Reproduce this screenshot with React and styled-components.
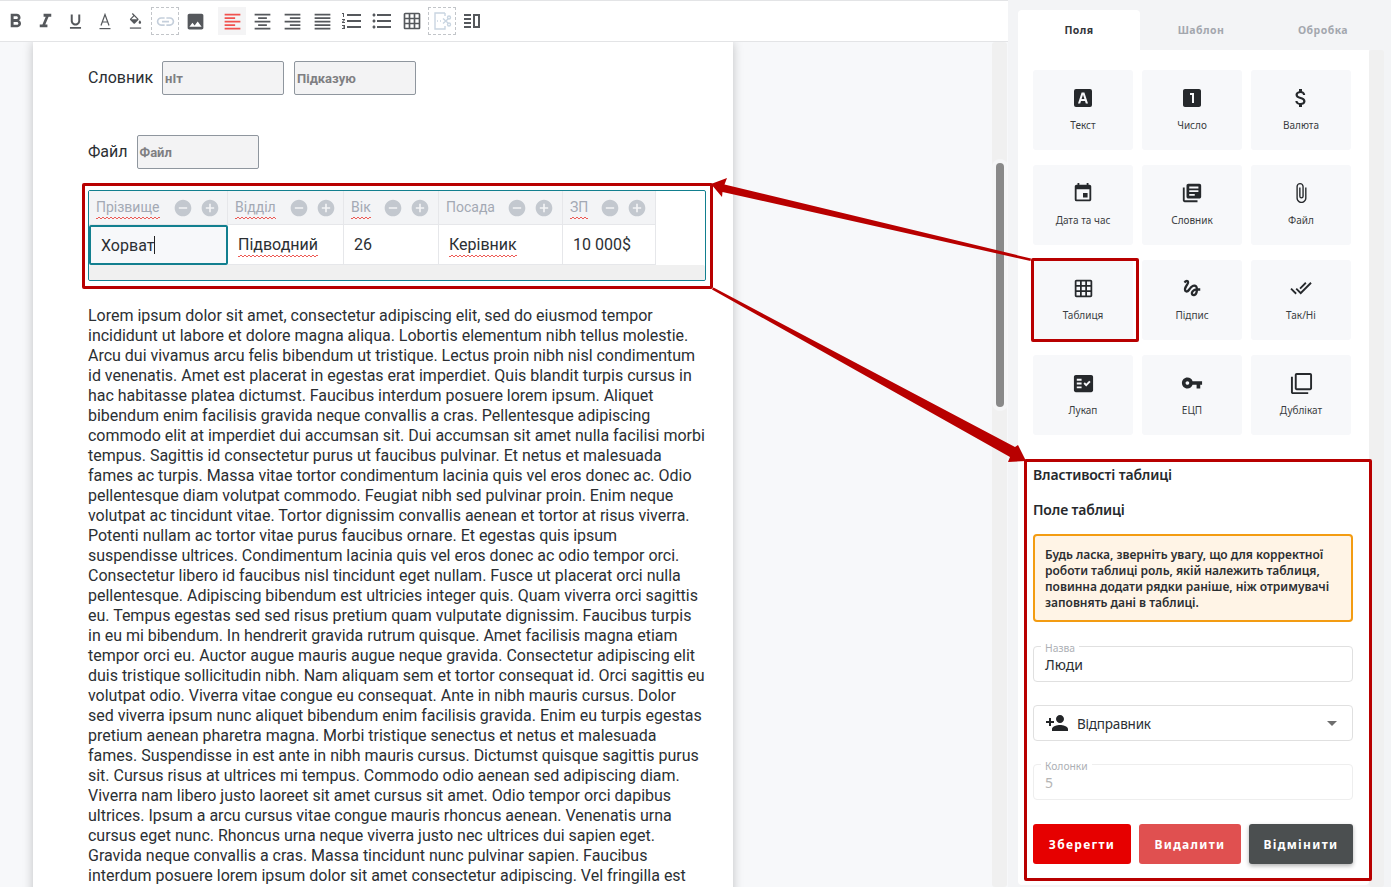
import React from 'react';
import styled, { createGlobalStyle, css } from 'styled-components';
import {
  MdFormatBold, MdFormatItalic, MdFormatUnderlined, MdLink, MdImage,
  MdFormatAlignLeft, MdFormatAlignCenter, MdFormatAlignRight, MdFormatAlignJustify, MdFormatListNumbered,
  MdFormatListBulleted, MdGridOn, MdRemoveCircle, MdAddCircle, MdAttachMoney, MdLooksOne, MdEvent,
  MdLibraryBooks, MdAttachFile, MdGesture, MdDoneAll, MdFactCheck, MdVpnKey, MdFilterNone, MdPersonAdd, MdArrowDropDown,
} from 'react-icons/md';

const Global = createGlobalStyle`
  html, body { margin: 0; padding: 0; height: 887px; overflow: hidden; background: #f3f4f6; }
  * { box-sizing: border-box; }
`;

const squiggle = css`
  padding-top: 2px;
  padding-bottom: 2px;
  background-image:
    linear-gradient(135deg, transparent 38%, #ee5a55 38%, #ee5a55 62%, transparent 62%),
    linear-gradient(45deg, transparent 38%, #ee5a55 38%, #ee5a55 62%, transparent 62%);
  background-size: 4px 2px;
  background-position: left bottom, 2px bottom;
  background-repeat: repeat-x;
`;

const Shell = styled.div`
  position: relative; width: 1391px; height: 887px; overflow: hidden; display: flex;
  font-family: Roboto, sans-serif; color: #2b2f33;
`;
const EditorColumn = styled.div`
  width: 1008px; height: 887px; display: flex; flex-direction: column; background: #f7f8fa; flex: none;
`;
const Toolbar = styled.div`
  height: 42px; flex: none; display: flex; align-items: center; gap: 2px; padding-left: 1px;
  background: #fff; border-top: 1px solid #e3e4e6; border-bottom: 1px solid #e3e4e6; color: #55585c;
`;
const ToolButton = styled.div`
  width: 28px; height: 28px; display: flex; align-items: center; justify-content: center; font-size: ${p => p.$size || 21}px;
  margin-left: ${p => (p.$gap ? '7px' : '0')};
  background: ${p => (p.$active ? '#f4f4f5' : 'transparent')};
  color: ${p => (p.$active ? '#f0524f' : p.$muted ? '#c5cfdb' : 'inherit')};
  border: ${p => (p.$dashed ? '1px dashed #c2c5c9' : 'none')};
`;
const EditorBody = styled.div`
  flex: 1; display: flex; min-height: 0;
`;
const PageArea = styled.div`
  flex: 1; min-width: 0; padding-left: 33px; overflow: hidden;
`;
const Page = styled.div`
  width: 700px; height: 900px; background: #fff; padding: 19px 27px 0 55px; box-shadow: 0 0 10px rgba(0,0,0,.22);
`;
const FormRow = styled.div`
  display: flex; align-items: center; height: 34px; margin-bottom: ${p => p.$mb || 0}px;
`;
const FieldLabel = styled.span`
  font-size: 16px; line-height: 20px; margin-right: 9px; color: #2b2f33;
`;
const PlaceholderInput = styled.div`
  width: 122px; height: 34px; margin-right: 10px; background: #f3f3f4; border: 1px solid #8f969e; border-radius: 2px;
  display: flex; align-items: center; padding: 1px 0 0 2px; font-size: 13px; font-weight: 700; color: #7f7f82;
`;
const TableBox = styled.div`
  width: 618px; height: 91px; margin-top: 21px; border: 1px solid #127f8f; border-radius: 2px; display: flex; flex-direction: column;
`;
const ColumnGrid = styled.div`
  display: grid; grid-template-columns: 139px 116px 95px 124px 93px; width: 567px;
`;
const HeaderCell = styled.div`
  height: 34px; background: #f3f4f6; border-right: 1px solid #e6e7ea; border-bottom: 1px solid #e6e7ea; display: flex; align-items: center; padding-left: 7px;
  font-size: 14px; color: #a3a9b4; font-weight: 400;
`;
const HeaderLabel = styled.span`
  flex: 1; display: flex;
`;
const HeaderText = styled.span`
  ${p => p.$bad && squiggle}
  line-height: 19px;
`;
const HeaderIcons = styled.span`
  display: flex; gap: 7px; margin-right: ${p => p.$mr}px; font-size: 20px; color: #c3c8cf;
`;
const BodyCell = styled.div`
  height: 40px; display: flex; align-items: center; padding-left: 10px; font-size: 16px; color: #2b2f33;
  background: ${p => (p.$selected ? '#f7f8fa' : '#fff')};
  border: ${p => (p.$selected ? '2px solid #127f8f' : 'none')};
  border-right: ${p => (p.$selected ? '2px solid #127f8f' : '1px solid #e6e7ea')};
  border-bottom: ${p => (p.$selected ? '2px solid #127f8f' : '1px solid #e6e7ea')};
  border-radius: ${p => (p.$selected ? '2px' : '0')};
`;
const BadWord = styled.span`
  ${squiggle}
  display: inline-block; line-height: 20px;
`;
const Caret = styled.span`
  display: inline-block; width: 1px; height: 18px; background: #222; vertical-align: -3px;
`;
const TableScroll = styled.div`
  flex: 1; background: #f0f0f0; border-radius: 2px;
`;
const BodyText = styled.p`
  margin: 25px 0 0; width: 617.5px; font-size: 16px; line-height: 20px; color: #2b2f33; letter-spacing: -0.012px;
`;
const MainScroll = styled.div`
  width: 15px; flex: none; margin-right: 1px; background: #f0f0f0; border-radius: 3px; display: flex; flex-direction: column; align-items: center; padding-top: 121px; overflow: hidden;
`;
const MainThumb = styled.div`
  width: 8px; height: 244px; background: #898989; border-radius: 4px; flex: none; box-shadow: 0 0 0 4px #f5f6f7;
`;
const Sidebar = styled.div`
  flex: 1; padding: 10px 7px 0 10px; font-family: "Noto Sans", sans-serif; display: flex; flex-direction: column; min-width: 0;
`;
const Tabs = styled.div`
  display: flex; height: 40px; flex: none;
`;
const Tab = styled.div`
  width: 122px; display: flex; align-items: center; justify-content: center; font-size: 10.5px; font-weight: 700; letter-spacing: .45px; padding-bottom: 1px;
  background: ${p => (p.$active ? '#fff' : 'transparent')};
  color: ${p => (p.$active ? '#33363a' : '#a3a7ae')};
  border-radius: 4px 4px 0 0;
`;
const SideBody = styled.div`
  flex: 1; display: flex; min-height: 0;
`;
const SidePanel = styled.div`
  width: 351px; height: 835px; background: #fff; padding: 20px 16px 0 15px; border-radius: 0 0 4px 4px;
`;
const SideScroll = styled.div`
  width: 15px; height: 837px; background: #f0f0f0; border-radius: 3px;
`;
const TileGrid = styled.div`
  display: grid; grid-template-columns: repeat(3, 100px); gap: 15px 9px;
`;
const Tile = styled.div`
  height: 80px; background: #f7f8fa; border-radius: 3px; display: flex; flex-direction: column; align-items: center;
  padding-top: 16px; color: #26292c;
`;
const TileIcon = styled.span`
  width: 24px; height: 24px; display: flex; align-items: center; justify-content: center; font-size: ${p => p.$size || 24}px;
  svg { display: block; }
`;
const TileLabel = styled.div`
  margin-top: 7px; font-size: 10px; line-height: 16px; color: #3a3d41;
`;
const Heading = styled.div`
  font-size: 14px; font-weight: 600; line-height: 20px; color: #26292c; letter-spacing: -0.15px; margin-top: ${p => p.$mt}px;
`;
const Notice = styled.div`
  margin-top: 14px; width: 320px; height: 88px; background: #fff4e6; border: 2px solid #f39c12; border-radius: 4px;
  padding: 11px 10px 0; font-size: 12px; line-height: 16px; font-weight: 600; color: #2c2e31; letter-spacing: -0.02px;
`;
const Outlined = styled.div`
  position: relative; width: 320px; height: 36px; margin-top: ${p => p.$mt}px; border: 1px solid ${p => (p.$disabled ? '#eeeeee' : '#e0e0e0')};
  border-radius: 4px; display: flex; align-items: center; padding: 0 11px; font-size: 14px;
  color: ${p => (p.$disabled ? '#b5b5b5' : '#2b2f33')};
`;
const FloatLabel = styled.span`
  position: absolute; left: 7px; top: -5px; background: #fff; padding: 0 4px; font-size: 10.3px; line-height: 13px; color: #adb0b5;
`;
const SelectValue = styled.span`
  font-size: 13.5px; letter-spacing: -0.2px; padding-top: 1px;
`;
const PersonIcon = styled.span`
  font-size: 24px; display: flex; margin-right: 8px; color: #232528;
`;
const Chevron = styled.span`
  margin-left: auto; font-size: 24px; display: flex; color: #6e6e6e; margin-right: -3px;
`;
const Actions = styled.div`
  display: flex; gap: 8px; margin-top: 24px; width: 320px;
`;
const ActionButton = styled.div`
  height: 40px; width: ${p => p.$w}px; background: ${p => p.$bg}; color: #fff; border-radius: 3px; display: flex; align-items: center; justify-content: center;
  font-size: 12px; font-weight: 700; letter-spacing: 1.3px;
  box-shadow: ${p => (p.$shadow ? '0 2px 4px rgba(0,0,0,.3)' : 'none')};
`;
const Marker = styled.div`
  position: absolute; left: ${p => p.$x}px; top: ${p => p.$y}px; width: ${p => p.$w}px; height: ${p => p.$h}px;
  border: 3px solid #b80000; border-radius: 2px; pointer-events: none;
`;
const ArrowLayer = styled.svg`
  position: absolute; left: 0; top: 0; pointer-events: none;
`;

const TextBoxIcon = () => (
  <svg width="24" height="24" viewBox="0 0 24 24" fill="currentColor"><path fillRule="evenodd" d="M3 5a2 2 0 0 1 2-2h14a2 2 0 0 1 2 2v14a2 2 0 0 1-2 2H5a2 2 0 0 1-2-2V5zm7.6 1.5L7 17.5h2.2l.8-2.6h4l.8 2.6H17L13.4 6.5h-2.8zm1.4 2.3L13.4 13h-2.8L12 8.8z" /></svg>
);
const TextColorIcon = () => (
  <svg width="14" height="17" viewBox="0 0 14 17" fill="none" stroke="currentColor" strokeWidth="1.2">
    <path d="M3 12.5L7 1.5l4 11M4.4 9h5.2" /><path d="M1.5 15.6h11" />
  </svg>
);
const FillIcon = () => (
  <svg width="15" height="17" viewBox="0 0 24 27" fill="currentColor">
    <path d="M16.56 8.94L7.62 0 6.21 1.41l2.38 2.38-5.15 5.15c-.59.59-.59 1.54 0 2.12l5.5 5.5c.29.29.68.44 1.06.44s.77-.15 1.06-.44l5.5-5.5c.59-.58.59-1.53 0-2.12zM5.21 10L10 5.21 14.79 10H5.21zM19 11.5s-2 2.17-2 3.5c0 1.1.9 2 2 2s2-.9 2-2c0-1.33-2-3.5-2-3.5z" />
    <rect x="3" y="23" width="18" height="2" />
  </svg>
);
const SplitIcon = () => (
  <svg width="22" height="22" viewBox="0 0 22 22" fill="none" stroke="#c9d5e1" strokeWidth="1.4">
    <path d="M11 3H4v16h10v-3M14 3v3M11 3h3" />
    <path d="M6 11h1M9 11h1" />
    <circle cx="18" cy="7.5" r="1.5" /><circle cx="18" cy="14.5" r="1.5" />
    <path d="M12 8.5l5 4.6M12 13.5l5-4.6" />
  </svg>
);
const ColumnsIcon = () => (
  <svg width="18" height="18" viewBox="0 0 18 18" fill="none" stroke="currentColor" strokeWidth="2">
    <path d="M1 3h7M1 7h7M1 11h7M1 15h7" /><rect x="11" y="3" width="5" height="12" />
  </svg>
);

const columns = [
  { name: 'Прізвище', bad: true, mr: 7, value: <>Хорват<Caret /></>, selected: true },
  { name: 'Відділ', bad: true, mr: 7, value: <BadWord>Підводний</BadWord> },
  { name: 'Вік', bad: true, mr: 8, value: '26' },
  { name: 'Посада', mr: 8, value: <BadWord>Керівник</BadWord> },
  { name: 'ЗП', bad: true, mr: 8, value: '10 000$' },
];
const tiles = [
  [<TextBoxIcon />, 'Текст'], [<MdLooksOne />, 'Число'], [<MdAttachMoney />, 'Валюта'],
  [<MdEvent />, 'Дата та час', 22], [<MdLibraryBooks />, 'Словник', 22], [<MdAttachFile />, 'Файл', 22],
  [<MdGridOn />, 'Таблиця', 21], [<MdGesture />, 'Підпис', 22], [<MdDoneAll />, 'Так/Ні', 22],
  [<MdFactCheck />, 'Лукап', 23], [<MdVpnKey />, 'ЕЦП', 22], [<MdFilterNone />, 'Дублікат', 23],
];
const loremStart = `Lorem ipsum dolor sit amet, consectetur adipiscing elit, sed do eiusmod tempor incididunt ut labore et dolore magna aliqua. Lobortis elementum nibh tellus molestie. Arcu dui vivamus arcu felis bibendum ut tristique. Lectus proin nibh nisl condimentum id venenatis. Amet est placerat in egestas erat imperdiet. Quis blandit turpis cursus in hac habitasse platea dictumst. Faucibus interdum posuere lorem ipsum. Aliquet bibendum enim facilisis gravida neque convallis a cras. Pellentesque adipiscing commodo elit at imperdiet dui accumsan sit. Dui accumsan sit amet nulla facilisi morbi tempus. Sagittis id consectetur purus ut faucibus pulvinar. Et netus et malesuada fames ac turpis. Massa vitae tortor condimentum lacinia quis vel eros donec ac. Odio pellentesque diam volutpat commodo. Feugiat nibh sed pulvinar proin. Enim neque volutpat ac tincidunt vitae. Tortor dignissim convallis aenean et tortor at risus viverra. Potenti nullam ac tortor vitae purus faucibus ornare. Et egestas quis ipsum suspendisse ultrices. Condimentum lacinia quis vel eros donec ac odio tempor orci. Consectetur libero id faucibus nisl tincidunt eget nullam. Fusce ut placerat orci nulla pellentesque. Adipiscing bibendum est ultricies integer quis. Quam viverra orci sagittis eu. Tempus egestas sed sed risus pretium quam vulputate dignissim. Faucibus turpis in eu mi bibendum. In hendrerit gravida rutrum quisque. Amet facilisis magna etiam tempor orci eu. Auctor augue mauris augue neque gravida. Consectetur adipiscing elit duis tristique sollicitudin nibh. Nam aliquam sem et tortor consequat id. Orci sagittis eu volutpat odio. Viverra vitae congue eu consequat. Ante in nibh mauris cursus. Dolor`;
const loremEnd = `sed viverra ipsum nunc aliquet bibendum enim facilisis gravida. Enim eu turpis egestas pretium aenean pharetra magna. Morbi tristique senectus et netus et malesuada fames. Suspendisse in est ante in nibh mauris cursus. Dictumst quisque sagittis purus sit. Cursus risus at ultrices mi tempus. Commodo odio aenean sed adipiscing diam. Viverra nam libero justo laoreet sit amet cursus sit amet. Odio tempor orci dapibus ultrices. Ipsum a arcu cursus vitae congue mauris rhoncus aenean. Venenatis urna cursus eget nunc. Rhoncus urna neque viverra justo nec ultrices dui sapien eget. Gravida neque convallis a cras. Massa tincidunt nunc pulvinar sapien. Faucibus interdum posuere lorem ipsum dolor sit amet consectetur adipiscing. Vel fringilla est`;

export default function App() {
  return (
    <Shell>
      <Global />
      <EditorColumn>
        <Toolbar>
          <ToolButton $size={23}><MdFormatBold /></ToolButton>
          <ToolButton $size={23}><MdFormatItalic /></ToolButton>
          <ToolButton $size={19}><MdFormatUnderlined /></ToolButton>
          <ToolButton><TextColorIcon /></ToolButton>
          <ToolButton><FillIcon /></ToolButton>
          <ToolButton $dashed $muted><MdLink /></ToolButton>
          <ToolButton><MdImage /></ToolButton>
          <ToolButton $gap $active><MdFormatAlignLeft /></ToolButton>
          <ToolButton><MdFormatAlignCenter /></ToolButton>
          <ToolButton><MdFormatAlignRight /></ToolButton>
          <ToolButton><MdFormatAlignJustify /></ToolButton>
          <ToolButton $size={24}><MdFormatListNumbered /></ToolButton>
          <ToolButton $size={24}><MdFormatListBulleted /></ToolButton>
          <ToolButton $size={20}><MdGridOn /></ToolButton>
          <ToolButton $dashed><SplitIcon /></ToolButton>
          <ToolButton><ColumnsIcon /></ToolButton>
        </Toolbar>
        <EditorBody>
          <PageArea>
            <Page>
              <FormRow $mb={40}>
                <FieldLabel>Словник</FieldLabel>
                <PlaceholderInput>нІт</PlaceholderInput>
                <PlaceholderInput>Підказую</PlaceholderInput>
              </FormRow>
              <FormRow>
                <FieldLabel>Файл</FieldLabel>
                <PlaceholderInput>Файл</PlaceholderInput>
              </FormRow>
              <TableBox>
                <ColumnGrid>
                  {columns.map(c => (
                    <HeaderCell key={c.name}>
                      <HeaderLabel><HeaderText $bad={c.bad}>{c.name}</HeaderText></HeaderLabel>
                      <HeaderIcons $mr={c.mr}><MdRemoveCircle /><MdAddCircle /></HeaderIcons>
                    </HeaderCell>
                  ))}
                  {columns.map(c => (
                    <BodyCell key={c.name} $selected={c.selected}><span>{c.value}</span></BodyCell>
                  ))}
                </ColumnGrid>
                <TableScroll />
              </TableBox>
              <BodyText>{loremStart}<br />{loremEnd}</BodyText>
            </Page>
          </PageArea>
          <MainScroll>
            <MainThumb />
          </MainScroll>
        </EditorBody>
      </EditorColumn>
      <Sidebar>
        <Tabs>
          <Tab $active>Поля</Tab>
          <Tab>Шаблон</Tab>
          <Tab>Обробка</Tab>
        </Tabs>
        <SideBody>
          <SidePanel>
            <TileGrid>
              {tiles.map(([icon, label, size]) => (
                <Tile key={label}><TileIcon $size={size}>{icon}</TileIcon><TileLabel>{label}</TileLabel></Tile>
              ))}
            </TileGrid>
            <Heading $mt={30}>Властивості таблиці</Heading>
            <Heading $mt={15}>Поле таблиці</Heading>
            <Notice>Будь ласка, зверніть увагу, що для корректної роботи таблиці роль, якій належить таблиця, повинна додати рядки раніше, ніж отримувачі заповнять дані в таблиці.</Notice>
            <Outlined $mt={24}>
              <FloatLabel>Назва</FloatLabel>
              <span>Люди</span>
            </Outlined>
            <Outlined $mt={23}>
              <PersonIcon><MdPersonAdd /></PersonIcon>
              <SelectValue>Відправник</SelectValue>
              <Chevron><MdArrowDropDown /></Chevron>
            </Outlined>
            <Outlined $mt={23} $disabled>
              <FloatLabel>Колонки</FloatLabel>
              <span>5</span>
            </Outlined>
            <Actions>
              <ActionButton $w={98} $bg="#e60000">Зберегти</ActionButton>
              <ActionButton $w={102} $bg="#e05050">Видалити</ActionButton>
              <ActionButton $w={104} $bg="#4b4f50" $shadow>Відмінити</ActionButton>
            </Actions>
          </SidePanel>
          <SideScroll />
        </SideBody>
      </Sidebar>
      <Marker $x={82} $y={183} $w={631} $h={106} />
      <Marker $x={1031} $y={258} $w={108} $h={84} />
      <Marker $x={1024} $y={459} $w={348} $h={422} />
      <ArrowLayer width="1391" height="887" viewBox="0 0 1391 887">
        <polygon fill="#b80000" points="711,184 727,178 724.5,184.5 1031,258.5 1030.5,261 722.5,192 722,197" />
        <polygon fill="#b80000" points="712,289.5 713.5,287.5 1015,447 1018,445 1026,461 1008,462 1010,457" />
      </ArrowLayer>
    </Shell>
  );
}
